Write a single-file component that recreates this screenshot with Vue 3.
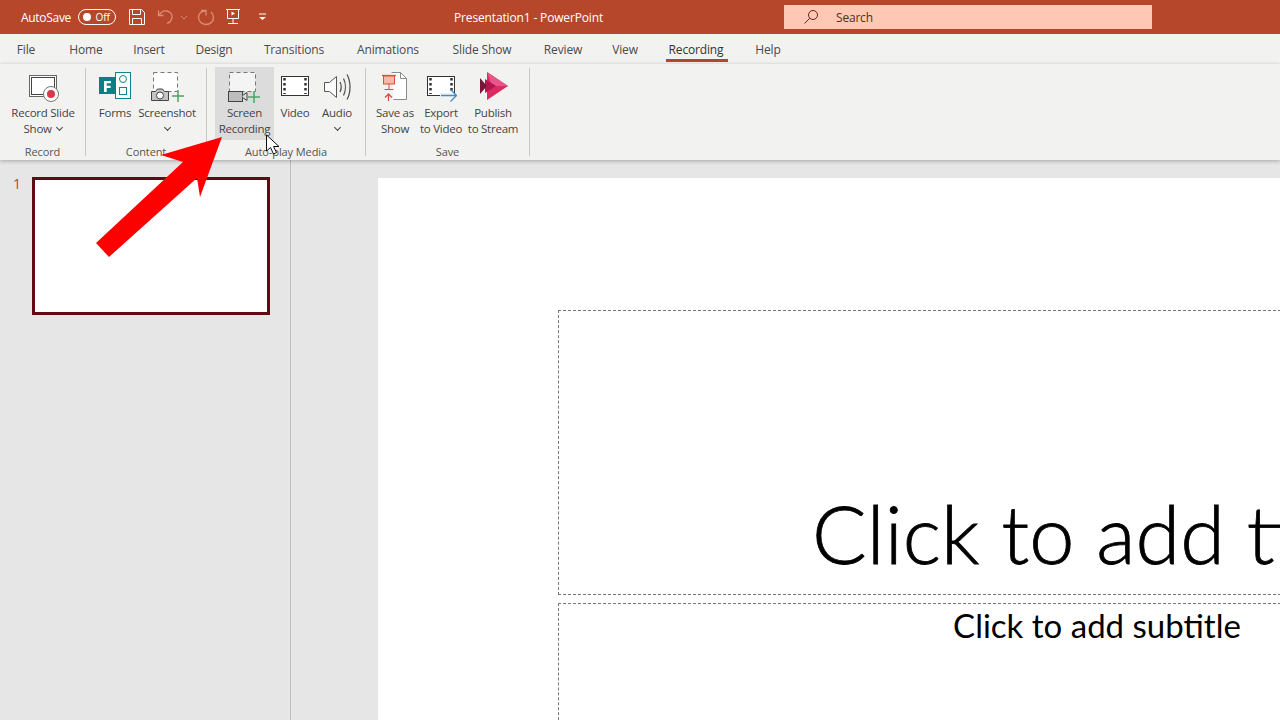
<script setup>
const tabs = [
  { t: 'File', w: 52 }, { t: 'Home', w: 68 }, { t: 'Insert', w: 58 }, { t: 'Design', w: 72 },
  { t: 'Transitions', w: 88 }, { t: 'Animations', w: 100 }, { t: 'Slide Show', w: 88 }, { t: 'Review', w: 74 },
  { t: 'View', w: 50 }, { t: 'Recording', w: 92, on: true }, { t: 'Help', w: 52 }
]
</script>

<template>
  <div class="app">
    <header class="titlebar">
      <span class="autosave">AutoSave</span>
      <span class="toggle"><i class="knob"></i><span>Off</span></span>
      <svg class="qa first" width="18" height="18" viewBox="0 0 18 18" fill="none" stroke="#fff" stroke-width="1"><path d="M1.5 1.5h12l3 3v12h-15z"/><path d="M4.5 1.5v5h8v-5M4.5 16.5v-6h9v6"/></svg>
      <svg class="qa undo" width="18" height="18" viewBox="0 0 18 18" fill="none" stroke="#d98e78" stroke-width="1.3"><path d="M1.5 2.5v5h5"/><path d="M2 7.5C4 4 7 2.5 10 3c3.500.6 5.500 3.500 5 6.500-.5 2.500-2.500 5-5 6"/></svg>
      <svg class="qa caret" width="8" height="5" viewBox="0 0 8 5" fill="none" stroke="#d98e78"><path d="M1 1l3 3 3-3"/></svg>
      <svg class="qa redo" width="18" height="18" viewBox="0 0 18 18" fill="none" stroke="#d98e78" stroke-width="1.3"><path d="M4 2.500h5v5"/><path d="M8 3C4 3 1.500 6 1.500 9.500s3 7 7.500 7 7.500-3 7.500-7c0-2-1-4-2.500-5.500"/></svg>
      <svg class="qa present" width="16" height="18" viewBox="0 0 16 18" fill="none" stroke="#fff"><path d="M1 1.500h14M2.500 1.500v9h11v-9M8 10.500v5M3 15.500h10"/><path d="M6.500 3.500l3.500 2-3.500 2z" fill="#fff" stroke="none"/></svg>
      <svg class="qa custom" width="9" height="8" viewBox="0 0 9 8" fill="none" stroke="#fff"><path d="M1 1h7"/><path d="M1 4l3.500 3L8 4z" fill="#fff" stroke="none"/></svg>
      <span class="doc-title">Presentation1 - PowerPoint</span>
      <div class="search">
        <svg width="16" height="16" viewBox="0 0 16 16" fill="none" stroke="#5b2a1c"><circle cx="10" cy="6" r="4.500"/><path d="M6.800 9.200L1.500 14.500"/></svg>
        <span>Search</span>
      </div>
    </header>

    <nav class="tabs">
      <span v-for="tab in tabs" :key="tab.t" class="tab" :class="{ on: tab.on }" :style="{ width: tab.w + 'px' }">{{ tab.t }}</span>
    </nav>

    <section class="ribbon">
      <div class="group g-record">
        <div class="btns">
          <div class="btn w-record">
            <svg class="ic" width="32" height="32" viewBox="0 0 32 32" fill="none">
              <rect x="2.500" y="4.500" width="27" height="21" fill="#fff" stroke="#666"/><rect x="4.500" y="6.500" width="23" height="17" stroke="#444"/>
              <circle cx="24" cy="23" r="7.500" fill="#fff" stroke="#777"/><circle cx="24" cy="23" r="4" fill="#d8394a"/>
            </svg>
            <span class="lb">Record Slide<br>Show <i class="chev"></i></span>
          </div>
        </div>
        <span class="gl">Record</span>
      </div>

      <div class="group g-content">
        <div class="btns">
          <div class="btn w-forms">
            <svg class="ic" width="36" height="32" viewBox="0 0 36 32" fill="none">
              <rect x="18.500" y="1.500" width="15" height="26" fill="#fff" stroke="#12858a"/>
              <circle cx="26" cy="8" r="3.500" stroke="#12858a"/><rect x="22.500" y="16.500" width="7" height="7" stroke="#12858a"/>
              <rect x="2" y="6" width="17" height="17" fill="#0b7f84"/>
              <path d="M7 10h7v2.300H9.700v2.400h3.900v2.200H9.700V21H7z" fill="#fff"/>
            </svg>
            <span class="lb">Forms</span>
          </div>
          <div class="btn w-shot">
            <svg class="ic" width="36" height="32" viewBox="0 0 36 32" fill="none">
              <rect x="4.500" y="1.500" width="24" height="19" stroke="#777" stroke-dasharray="4 3" fill="#fff"/>
              <path d="M2.500 20.500h4l2-2.500h5l2 2.500h4v9h-17z" fill="#c4c4c4" stroke="#444"/>
              <circle cx="11" cy="24.500" r="3.500" fill="#fff" stroke="#444"/>
              <path d="M29 19v12M23 25h12" stroke="#4aa564" stroke-width="1.500"/>
            </svg>
            <span class="lb">Screenshot</span>
            <i class="chev solo"></i>
          </div>
        </div>
        <span class="gl">Content</span>
      </div>

      <div class="group g-media">
        <div class="btns">
          <div class="btn w-rec hot">
            <svg class="ic" width="37" height="32" viewBox="0 0 37 32" fill="none">
              <rect x="3.500" y="1.500" width="26" height="19" stroke="#777" stroke-dasharray="4 3" fill="#f4f4f4"/>
              <rect x="2.500" y="20.500" width="14" height="10" fill="#bdbdbd" stroke="#444"/>
              <path d="M16.500 24.500l4.500-3v8l-4.500-3" fill="#dcdcdc" stroke="#444"/>
              <path d="M28 20v12M22 26h12" stroke="#4aa564" stroke-width="1.500"/>
            </svg>
            <span class="lb">Screen<br>Recording</span>
          </div>
          <div class="btn w-video">
            <svg class="ic" width="32" height="32" viewBox="0 0 32 32" fill="none">
              <rect x="2.500" y="5.500" width="27" height="19" fill="#fff" stroke="#333"/>
              <path d="M5.500 7v16M26.500 7v16" stroke="#333" stroke-width="2.500" stroke-dasharray="2.500 2.500"/>
            </svg>
            <span class="lb">Video</span>
          </div>
          <div class="btn w-audio">
            <svg class="ic" width="32" height="32" viewBox="0 0 32 32" fill="none" stroke="#555">
              <path d="M3.500 11.500h5l7-6v21l-7-6h-5z" fill="#fff"/>
              <path d="M19 11c1.500 3 1.500 7 0 10M22.500 7.500c2.500 5 2.500 12 0 17M26 3.500c4 7 4 18 0 25" stroke-width="1.300"/>
            </svg>
            <span class="lb">Audio</span>
            <i class="chev solo"></i>
          </div>
        </div>
        <span class="gl">Auto-play Media</span>
      </div>

      <div class="group g-save">
        <div class="btns">
          <div class="btn w-saveas">
            <svg class="ic" width="32" height="32" viewBox="0 0 32 32" fill="none">
              <path d="M12.500 1.500h9l6 6v21h-13" fill="#fff" stroke="#8a8a8a"/><path d="M21.500 1.500v6h6" stroke="#8a8a8a"/>
              <path d="M3 4.500h14" stroke="#d2553a" stroke-width="1.300"/><rect x="4.500" y="5" width="11" height="8" fill="#f7b9a3" stroke="#d2553a"/>
              <path d="M10 13v5.500M5.500 18.500h9" stroke="#d2553a"/>
              <path d="M9.500 30v-7M6 26.500L9.500 23l3.500 3.500" stroke="#d2553a" stroke-width="1.300"/>
            </svg>
            <span class="lb">Save as<br>Show</span>
          </div>
          <div class="btn w-export">
            <svg class="ic" width="32" height="32" viewBox="0 0 32 32" fill="none">
              <rect x="2.500" y="5.500" width="27" height="19" fill="#fff" stroke="#333"/>
              <path d="M5.500 7v16M26.500 7v16" stroke="#333" stroke-width="2.500" stroke-dasharray="2.500 2.500"/>
              <path d="M15 24.500h17" stroke="#f3f2f1" stroke-width="5"/>
              <path d="M16 24.500h15M25.500 18.500l6 6-6 6" stroke="#3a8fc6" stroke-width="1.300"/>
            </svg>
            <span class="lb">Export<br>to Video</span>
          </div>
          <div class="btn w-publish">
            <svg class="ic" width="32" height="32" viewBox="0 0 32 32" fill="none">
              <path d="M10 1l21 14-21 14z" fill="#dc2a63"/>
              <path d="M10 1l21 14H15z" fill="#e8558a"/>
              <path d="M8 8l11 7-11 7z" fill="#b2164e"/>
              <path d="M3 7l7 8-7 8z" fill="#7f1239"/>
            </svg>
            <span class="lb">Publish<br>to Stream</span>
          </div>
        </div>
        <span class="gl">Save</span>
      </div>
    </section>

    <main class="workspace">
      <aside class="thumbs">
        <span class="num">1</span>
        <div class="thumb"></div>
      </aside>
      <div class="canvas">
        <div class="slide">
          <div class="ph ph-title"><span class="ph-text">Click to add title</span></div>
          <div class="ph ph-sub"><span class="ph-text">Click to add subtitle</span></div>
        </div>
      </div>
    </main>

    <svg class="overlay" width="300" height="280" viewBox="0 0 300 280">
      <path d="M222 137L161 155 183 162 96 243 109 257 197 178 200 197z" fill="#fe0000"/>
      <path d="M266.500 135v16l4-3.500 3 6.500 3-1.500-3-6h5.500z" fill="#fff" stroke="#111"/>
    </svg>
  </div>
</template>

<style>
html, body { margin: 0; overflow: hidden; }
</style>

<style scoped>
.app {
  position: relative;
  width: 1280px;
  height: 720px;
  overflow: hidden;
  display: flex;
  flex-direction: column;
  font-family: "Open Sans", "Liberation Sans", sans-serif;
  font-size: 12px;
  color: #444;
  background: #e6e6e6;
}
.titlebar {
  flex: none;
  height: 34px;
  background: #b7472a;
  color: #fff;
  display: flex;
  align-items: center;
  padding-left: 21px;
  box-sizing: border-box;
}
.autosave { width: 57px; font-size: 12px; letter-spacing: -0.3px; }
.toggle {
  width: 38px;
  height: 16px;
  box-sizing: border-box;
  border: 1px solid #fff;
  border-radius: 8px;
  display: flex;
  align-items: center;
  justify-content: space-between;
  padding: 0 5px 0 4px;
  font-size: 10px;
}
.knob { width: 8px; height: 8px; border-radius: 50%; background: #fff; }
.qa { flex: none; display: block; }
.first { margin-left: 12px; }
.undo { margin-left: 11px; }
.caret { margin-left: 5px; }
.redo { margin-left: 9px; }
.present { margin-left: 10px; }
.custom { margin-left: 17px; }
.doc-title { width: 190px; margin-left: 187px; font-size: 12px; letter-spacing: -0.15px; }
.search {
  margin-left: 140px;
  width: 368px;
  height: 24px;
  background: #fec8b4;
  color: #5b2a1c;
  display: flex;
  align-items: center;
  padding-left: 19px;
  gap: 17px;
  box-sizing: border-box;
  letter-spacing: -0.2px;
}
.tabs {
  flex: none;
  height: 30px;
  background: #f2f2f0;
  display: flex;
  font-size: 12px;
  letter-spacing: -0.15px;
}
.tab { display: flex; justify-content: center; align-items: center; position: relative; color: #4a4a4a; }
.tab.on { color: #333; font-weight: 500; }
.tab.on::after {
  content: "";
  position: absolute;
  left: 16px;
  right: 14px;
  bottom: 2px;
  height: 3px;
  background: #b7472a;
}
.ribbon {
  flex: none;
  height: 96px;
  background: #f2f2f0;
  display: flex;
  position: relative;
  box-shadow: 0 1px 4px rgba(0, 0, 0, 0.28);
  z-index: 1;
}
.group {
  box-sizing: border-box;
  display: flex;
  flex-direction: column;
  align-items: stretch;
  border-right: 1px solid #c8c8c8;
  margin: 4px 0;
  position: relative;
}
.g-record { width: 86px; padding-left: 6px; }
.g-content { width: 121px; padding-left: 11px; }
.g-media { width: 159px; padding-left: 8px; }
.g-save { width: 164px; padding-left: 6px; }
.btns { display: flex; height: 76px; margin-top: -1px; }
.gl { text-align: center; font-size: 11px; line-height: 14px; margin-top: 5px; color: #555; letter-spacing: -0.1px; white-space: nowrap; }
.g-record .gl { margin-left: -6px; }
.g-content .gl { margin-left: -11px; }
.g-media .gl { margin-left: -8px; }
.g-save .gl { margin-left: -6px; }
.btn {
  flex: none;
  box-sizing: border-box;
  height: 73px;
  display: flex;
  flex-direction: column;
  align-items: center;
  padding-top: 4px;
}
.btn.hot { background: #dcdcdc; }
.ic { display: block; flex: none; height: 32px; }
.lb {
  text-align: center;
  font-size: 11.5px;
  line-height: 16px;
  letter-spacing: -0.25px;
  white-space: nowrap;
  color: #444;
  margin-top: 1.6px;
}
.w-record { width: 74px; }
.w-forms { width: 36px; }
.w-shot { width: 58px; margin-left: 5px; }
.w-rec { width: 59px; }
.w-video { width: 42px; }
.w-audio { width: 42px; }
.w-saveas { width: 46px; }
.w-export { width: 46px; }
.w-publish { width: 54px; margin-left: 2px; }
.chev {
  display: inline-block;
  width: 4px;
  height: 4px;
  border-right: 1px solid #444;
  border-bottom: 1px solid #444;
  transform: rotate(45deg);
  margin: 0 0 3px 3px;
}
.chev.solo { margin: 4px 0 0; }
.workspace { flex: 1; display: flex; min-height: 0; }
.thumbs {
  flex: none;
  width: 291px;
  box-sizing: border-box;
  border-right: 1px solid #bdbdbd;
  display: flex;
  padding: 17px 0 0 13px;
  align-items: flex-start;
}
.num { width: 19px; color: #b7472a; font-size: 14px; line-height: 14px; }
.thumb {
  box-sizing: border-box;
  width: 238px;
  height: 138px;
  background: #fff;
  border: 3px solid #5e0b15;
}
.canvas { flex: 1; min-width: 0; overflow: hidden; padding: 18px 0 0 87px; }
.slide {
  width: 1437px;
  height: 808px;
  box-sizing: border-box;
  background: #fff;
  padding: 132px 0 0 180px;
  font-family: Lato, "Open Sans", sans-serif;
  color: #000;
}
.ph {
  box-sizing: border-box;
  width: 1078px;
  border: 1px dashed #777;
  display: flex;
  justify-content: center;
}
.ph-text { white-space: nowrap; }
.ph-title { height: 285px; align-items: flex-end; font-size: 81px; font-weight: 300; line-height: 96px; padding-bottom: 13px; -webkit-text-stroke: 0.8px #000; }
.ph-sub { margin-top: 8px; height: 281px; font-size: 33px; line-height: 42px; }
.overlay { position: absolute; left: 0; top: 0; z-index: 2; pointer-events: none; }
</style>
